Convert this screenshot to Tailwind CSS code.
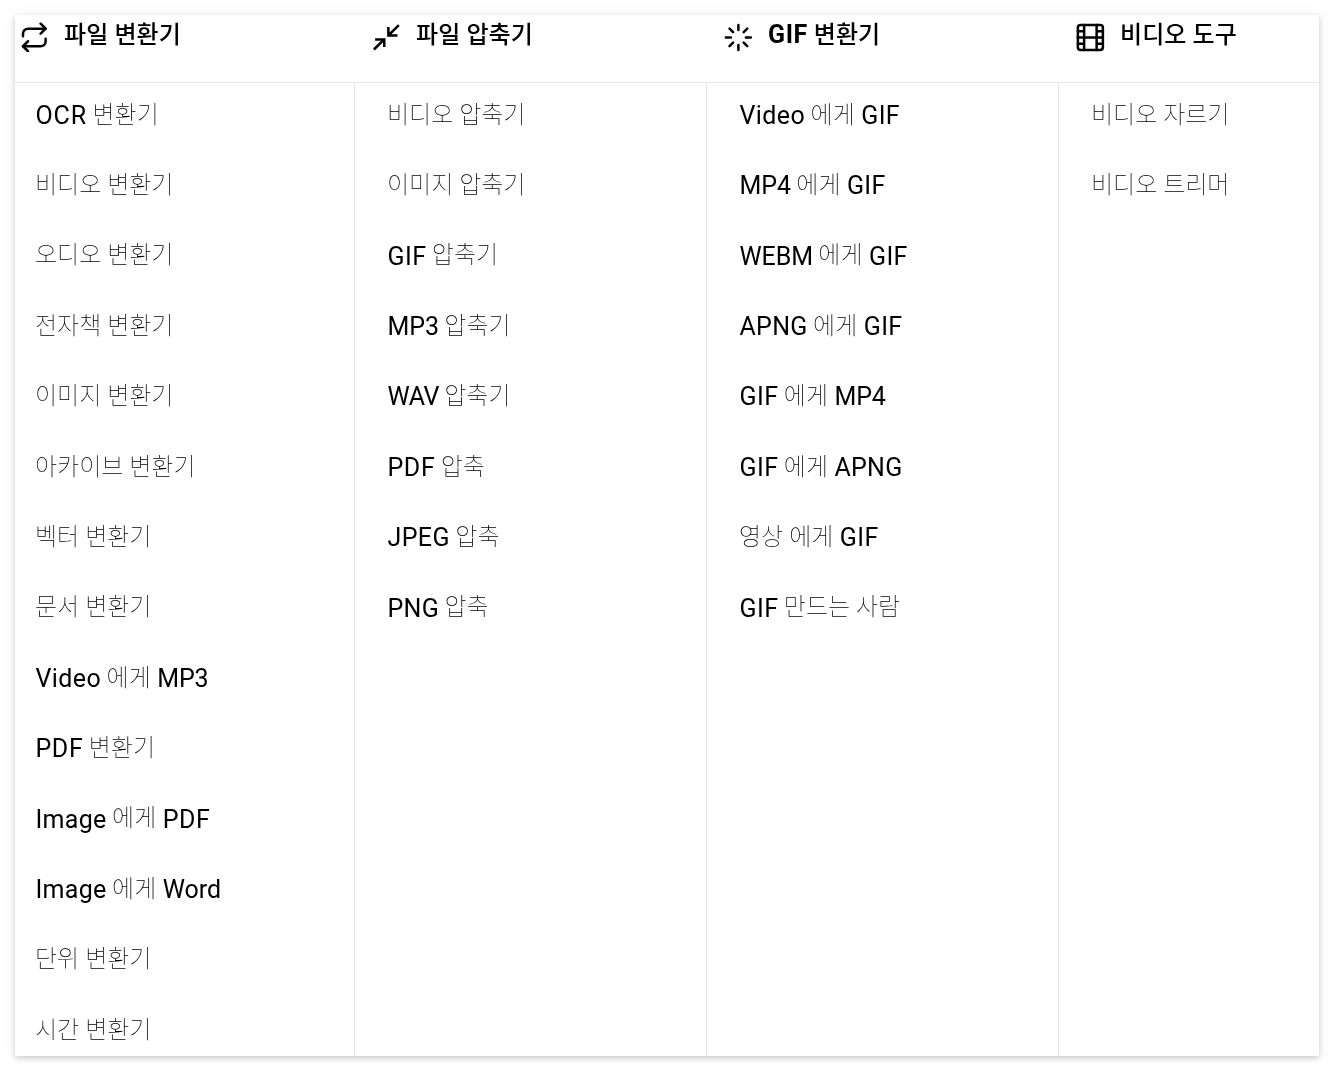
<!DOCTYPE html>
<html lang="ko">
<head>
  <meta charset="UTF-8" />
  <meta name="viewport" content="width=device-width, initial-scale=1" />
  <title>파일 변환기</title>
  <script src="https://cdn.jsdelivr.net/npm/@tailwindcss/browser@4"></script>
</head>
<body class="bg-[#fefefe] h-[1072px] overflow-hidden pt-[15px] pl-[15px] text-black antialiased font-['Roboto','Noto_Sans_CJK_KR',sans-serif]">
  <div class="w-[1304px] h-[1041px] bg-white shadow-[0_2px_6px_rgba(0,0,0,0.2),0_0_14px_rgba(0,0,0,0.04)] will-change-transform">
    <div class="flex h-[68px] border-b border-[#e6e6f0] text-2xl leading-10 font-medium">
      <div class="flex w-[352px] pl-1 gap-[15px]">
        <svg class="w-[30px] h-[30px] mt-[7px]" viewBox="0 0 24 24" fill="none" stroke="currentColor" stroke-width="2" stroke-linecap="round" stroke-linejoin="round">
          <path d="m17.300 1.300 4 4-4 4" /><path d="M3.200 11.300V9.300a4 4 0 0 1 4-4h14" /><path d="m7.200 23.400-4-4 4-4" /><path d="M21.300 13.400v2a4 4 0 0 1-4 4H3.200" />
        </svg>
        <h2 class="tracking-[0.1px]">파일 변환기</h2>
      </div>
      <div class="flex w-[352px] pl-1 gap-[15px]">
        <svg class="w-[30px] h-[30px] mt-[7px]" viewBox="0 0 24 24" fill="none" stroke="currentColor" stroke-width="2">
          <path d="M2.300 22 10.600 13.900M3.300 14h7.300v5.900M22.300 2.500l-8.500 8.300M13.900 4v6.700h7.300" />
        </svg>
        <h2 class="tracking-[0.1px]">파일 압축기</h2>
      </div>
      <div class="flex w-[352px] pl-1 gap-[15px]">
        <svg class="w-[30px] h-[30px] mt-[7px]" viewBox="0 0 24 24" fill="none" stroke="currentColor" stroke-width="2" stroke-linecap="round">
          <path transform="translate(.3 .3)" d="M12 2v4M12 18v4M4.930 4.930l2.830 2.830M16.240 16.240l2.830 2.830M2 12h4M18 12h4M4.930 19.070l2.830-2.830M16.240 7.760l2.830-2.830" />
        </svg>
        <h2><span class="font-bold text-[25px] tracking-[0.6px]">GIF</span> 변환기</h2>
      </div>
      <div class="flex pl-1 gap-[15px]">
        <svg class="w-[30px] h-[30px] mt-[7px]" viewBox="0 0 24 24" fill="none" stroke="currentColor" stroke-width="2" stroke-linecap="round" stroke-linejoin="round">
          <g transform="translate(.3 .3)"><rect x="2" y="2" width="20" height="20" rx="2.180" /><path d="M7 2v20M17 2v20M2 12h20M2 7h5M2 17h5M17 17h5M17 7h5" /></g>
        </svg>
        <h2 class="tracking-[0.1px]">비디오 도구</h2>
      </div>
    </div>
    <div id="menu" class="flex h-[973px] text-2xl leading-10"></div>
  </div>

  <script>
    const columns = [
      ["OCR 변환기", "비디오 변환기", "오디오 변환기", "전자책 변환기", "이미지 변환기", "아카이브 변환기", "벡터 변환기", "문서 변환기", "Video 에게 MP3", "PDF 변환기", "Image 에게 PDF", "Image 에게 Word", "단위 변환기", "시간 변환기"],
      ["비디오 압축기", "이미지 압축기", "GIF 압축기", "MP3 압축기", "WAV 압축기", "PDF 압축", "JPEG 압축", "PNG 압축"],
      ["Video 에게 GIF", "MP4 에게 GIF", "WEBM 에게 GIF", "APNG 에게 GIF", "GIF 에게 MP4", "GIF 에게 APNG", "영상 에게 GIF", "GIF 만드는 사람"],
      ["비디오 자르기", "비디오 트리머"]
    ];
    const columnClass = [
      "w-[340px] pl-5 border-r border-[#e6e6f0]",
      "w-[352px] pl-8 border-r border-[#e6e6f0]",
      "w-[352px] pl-8 border-r border-[#e6e6f0]",
      "w-[260px] pl-8"
    ];
    const tracking = {
      OCR: "tracking-[0.9px]",
      Video: "tracking-[0.4px]",
      Image: "tracking-[0.3px]",
      APNG: "tracking-[0.3px]",
      JPEG: "tracking-[0.4px]",
      PDF: "tracking-[0.6px]",
      PNG: "tracking-[0.3px]",
      GIF: "tracking-[0.4px]",
      WAV: "tracking-[-0.5px]",
      WEBM: "tracking-[-0.1px]",
      Word: "tracking-[0px]"
    };

    // Latin words are heavier than the Hangul around them
    function renderWord(word) {
      return /[A-Z]/.test(word)
        ? `<span class="relative left-[0.5px] top-[1.2px] text-[25px] ${tracking[word] || "tracking-[-0.1px]"}">${word}</span>`
        : `<span class="font-thin">${word}</span>`;
    }

    document.getElementById("menu").innerHTML = columns.map((items, i) => `
      <ul class="${columnClass[i]} pt-[11.7px] space-y-[30.38px]">
        ${items.map(item => `<li class="h-10 whitespace-nowrap">${item.split(" ").map(renderWord).join(" ")}</li>`).join("")}
      </ul>
    `).join("");
  </script>
</body>
</html>
